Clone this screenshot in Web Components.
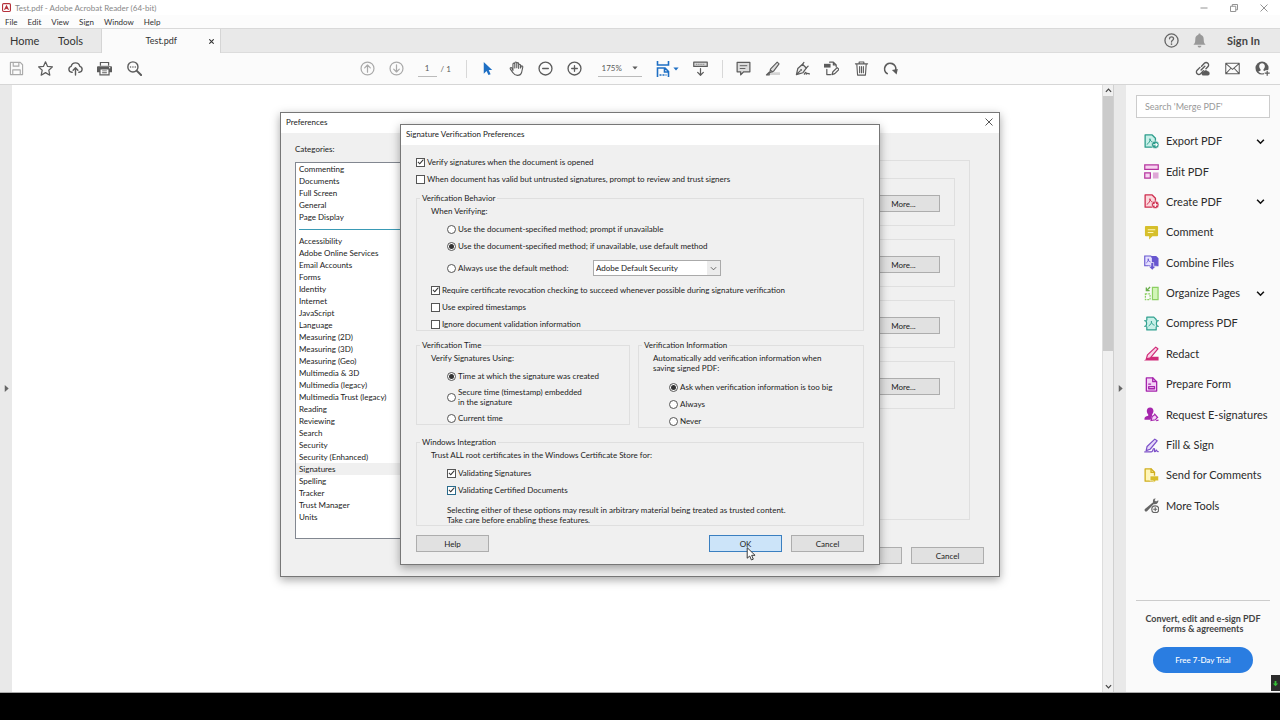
<!DOCTYPE html>
<html lang="en">
<head>
<meta charset="utf-8">
<title>Test.pdf - Adobe Acrobat Reader (64-bit)</title>
<style>
html,body{margin:0;height:100%;overflow:hidden;background:#fff}
body{font-family:Lato,"Open Sans","Noto Sans",sans-serif;font-size:8px;line-height:12px;color:#222}
</style>
</head>
<body>
<reader-app></reader-app>
<script>
const RESET='*{box-sizing:border-box}:host([hidden]){display:none}button,input,select{font:inherit;color:inherit;margin:0}button{padding:0;border:0;background:none}';
function define(name,css,render){
  customElements.define(name,class extends HTMLElement{
    constructor(){super();this.attachShadow({mode:'open'});}
    connectedCallback(){
      if(this.shadowRoot.childNodes.length)return;
      const t=document.createElement('template');
      t.innerHTML='<style>'+RESET+css+'</style>'+render(this);
      this.shadowRoot.append(t.content.cloneNode(true));
    }
  });
}
const attr=(el,n,d='')=>el.getAttribute(n)??d;

/* icons on a 16 unit grid */
const s=(w=1.3,c='currentColor',f='none')=>`fill="${f}" stroke="${c}" stroke-width="${w}" stroke-linecap="round" stroke-linejoin="round"`;
const PDF='M3.300 11c2.200-1.300 3.300-3.500 3-6 .3 2 1.300 3.400 3.200 4';
const ICONS={
 logo:'<rect x="1" y="1" width="14" height="14" rx="2" fill="#fff" stroke="#b5303a" stroke-width="2"/><path d="M3 13 8 3l5 10-5-3z" fill="#b5303a"/>',
 save:`<path ${s(1.2)} d="M1.500 1.500H12l2.500 2.500v10.500h-13zM4.500 1.500v4h6v-4M4 14.500v-5h8v5"/>`,
 star:`<path ${s()} d="M8 .9l2.200 4.900 5.200.5-3.900 3.500 1.100 5.300L8 12.400l-4.600 2.700 1.100-5.300L.6 6.300l5.200-.5z"/>`,
 cloud:`<path ${s(1.5)} d="M4.500 12H4a3.200 3.200 0 0 1-.6-6.300 4.700 4.700 0 0 1 9.200 0A3.200 3.200 0 0 1 12 12h-.5M8 15V7.500M5.500 9.800 8 7.300l2.500 2.500"/>`,
 print:'<path fill="currentColor" d="M3 1h10v4H3zM1 5.500h14a1 1 0 0 1 1 1V12h-2.500v3.500h-11V12H0V6.500a1 1 0 0 1 1-1z"/><path fill="#fbfbfb" d="M4.300 2.200h7.400V5H4.300zM3.800 9h8.400v5H3.800z"/><path fill="currentColor" d="M5.500 10h5v1h-5zm0 2h5v1h-5z"/><circle cx="13.500" cy="7.200" r=".7" fill="#fff"/>',
 find:`<circle ${s(1.5)} cx="6.300" cy="6.300" r="5.400"/><path ${s(2.2)} d="m10.800 10.800 4.200 4.200"/><g fill="currentColor"><circle cx="3.800" cy="6.300" r=".8"/><circle cx="6.300" cy="6.300" r=".8"/><circle cx="8.800" cy="6.300" r=".8"/></g>`,
 up:`<g ${s()}><circle cx="8" cy="8" r="6.900"/><path d="M8 12V4.500M5 7.300l3-3 3 3"/></g>`,
 down:`<g ${s()}><circle cx="8" cy="8" r="6.900"/><path d="M8 4v7.500M5 8.700l3 3 3-3"/></g>`,
 arrow:'<path fill="#1e6fc4" d="M4 1v12.500l3-2.800 2 4.300 2.300-1-2-4.300H13z"/>',
 hand:`<path ${s(1.2)} d="M4.200 10V3.500c0-1.600 2-1.600 2 0v4-5.300c0-1.600 2.100-1.600 2.100 0v5-4.400c0-1.500 2-1.500 2 0v5-3.200c0-1.500 2-1.500 2 0V7.500l.6-1.500c.6-1.300 2.100-.8 1.800.6L13.500 12c-.6 2.200-2 3.300-4.500 3.300-2.400 0-3.700-1-4.700-2.700L1.500 8.700c-.8-1.300.8-2.100 1.700-1z"/>`,
 minus:`<g ${s(1.4)}><circle cx="8" cy="8" r="6.900"/><path d="M5 8h6"/></g>`,
 plus:`<g ${s(1.4)}><circle cx="8" cy="8" r="6.900"/><path d="M5 8h6M8 5v6"/></g>`,
 fit:'<g fill="none" stroke="#1e6fc4" stroke-width="1.600"><path d="M2.500 0v4h11V0M2.500 16V7h7.500l3.500 3.500V16M9.500 7v4h4"/><path d="M4.500 14h7" stroke-dasharray="2 1"/></g>',
 keyboard:`<g ${s()}><path fill="#ddd" d="M.8 1.200h14.400v4.600H.8z"/><path d="M8 8v7M5 12.200l3 3 3-3"/></g><path stroke="currentColor" stroke-dasharray="1 1" d="M3 3.500h10"/>`,
 note:`<path ${s(1.3,'currentColor','#ddd')} d="M1.200 1.500h13.600v10H8.200L5 14.800v-3.300H1.200z"/><path stroke="currentColor" d="M4 5h8M4 8h6"/>`,
 marker:`<path fill="#d4d4d4" d="M5 12h11v3H3z"/><path ${s(1.2,'currentColor','#ddd')} d="M13 1.200 15 3 9 11l-4 1.500 1-4.200zM5.500 9.500l2.500 2M4.500 12l-3 2.800h3z"/>`,
 pen:`<path ${s(1.3,'currentColor','#eee')} d="M1.500 14.500 3 8l5-4.500 4 4-3.500 5zM1.500 14.500l4-4"/><path ${s()} d="M8 3.500 9.500 1.500M12 7.500l2-2M10 14c1.500-3 2-2 2 0 1.500-1.500 2-.5 3.500-.2"/><circle cx="6.500" cy="9.500" r="1" fill="currentColor"/>`,
 fields:`<path ${s()} d="M6 1.200h4l3 3V6M10 1.200v3h3M3 9v5.500h4M8.500 14.500l1-3L14 7l2 2-4.500 4.500z"/><path fill="currentColor" d="M0 3h7v4H0z"/>`,
 trash:`<path ${s(1.2)} d="M1.500 3h13M5.500 3V1h5v2M3 3.500l.8 11.500h8.400L13 3.500M6 6v6.500M8 6v6.500M10 6v6.500"/>`,
 rotate:`<path ${s(1.8)} d="M4.500 13.500A6 6 0 1 1 13.500 10"/><path fill="currentColor" d="M9.500 9.500 15.800 8.500l-1.300 6z"/>`,
 link:`<path ${s(1.5)} d="m6.500 9.500 4-4M7 5.500l3-3a2.600 2.600 0 0 1 3.700 3.700l-2 2M9 10.500l-3 3a2.600 2.600 0 0 1-3.700-3.700l3-3"/><path fill="currentColor" d="M9 15.500a2 2 0 0 1 0-4 2.600 2.600 0 0 1 4.600-.5A2.300 2.300 0 0 1 14 15.500z"/>`,
 mail:`<path ${s(1.1)} d="M.8 2.500h14.400v11H.8zM1 2.800l7 6.200 7-6.200M1.200 13.200 6 8M14.800 13.200 10 8"/>`,
 user:`<circle cx="7.500" cy="7.500" r="7" fill="currentColor"/><path fill="#fbfbfb" d="M7.500 2.500c2 0 3 1.500 3 3.200 0 1.500-.7 2.700-1.500 3.300v1.200l2.500 1.300a6 6 0 0 1-8 0L6 10.200V9c-.8-.6-1.500-1.800-1.500-3.300 0-1.700 1-3.200 3-3.200z"/><circle cx="13" cy="13" r="3.500" fill="#fbfbfb"/><path stroke="currentColor" stroke-width="1.300" d="M13 10.300v5.400M10.300 13h5.400"/>`,
 help:`<g ${s(1.4)}><circle cx="8" cy="8" r="7"/><path d="M5.900 6.200c0-3 4.300-2.700 4.300 0C10.200 7.800 8 7.800 8 9.600"/></g><circle cx="8" cy="11.800" r=".9" fill="currentColor"/>`,
 bell:'<path fill="currentColor" d="M8 .5c.8 0 1.200.5 1.200 1.300 2.500.6 3.300 2.500 3.300 5 0 3 .5 4 2 5.700h-13c1.500-1.700 2-2.700 2-5.700 0-2.500.8-4.400 3.300-5C6.800 1 7.200.5 8 .5zM6 13.500h4c0 2.500-4 2.500-4 0z"/>',
 chevron:'<path fill="none" stroke="currentColor" stroke-width="2.800" d="m2 5 6 6 6-6"/>',
 thin:'<path fill="none" stroke="currentColor" stroke-width="2" d="m2 5 6 6 6-6"/>',
 close:'<path fill="none" stroke="currentColor" stroke-width="1.800" d="m1 1 14 14M15 1 1 15"/>',
 shut:'<path fill="none" stroke="currentColor" stroke-width="3.400" d="m1 1 14 14M15 1 1 15"/>',
 bar:'<path fill="none" stroke="currentColor" stroke-width="1.800" d="M1 8h14"/>',
 restore:'<path fill="none" stroke="currentColor" stroke-width="1.800" d="M1 4.500h10.500V15H1zM4.500 4.500V1H15v10.500h-3.500"/>',
 caret:'<path fill="currentColor" d="M1 4h14l-7 8z"/>',
 right:'<path fill="currentColor" d="M4 0v16l9-8z"/>',
 export:`<g ${s(1.4,'#2d9d8c')}><path fill="#c7f0e8" d="M1.200 1h7.500l3.500 3.500V14h-11z"/><path stroke-width="1" d="${PDF}"/></g><circle cx="12" cy="11.500" r="4" fill="#2d9d8c" stroke="#fafafa" stroke-width=".6"/><path stroke="#fff" fill="none" stroke-width="1.200" d="M9.800 11.500h4.200m-1.600-1.700 1.700 1.700-1.700 1.700"/>`,
 edit:'<g stroke="#b5359f" stroke-width="1.300" fill="#f7d3f0"><path d="M.8 1h14.400v4.700H.8zM.8 9.500h6V15h-6z"/></g><path fill="#dfa6d6" d="M9.500 9h6v6.500h-6z"/>',
 create:`<g ${s(1.4,'#cf2f50')}><path fill="#fbd7dc" d="M1.200 1h7.500l3.500 3.500V14h-11z"/><path stroke-width="1" d="${PDF}"/></g><circle cx="12" cy="11.500" r="4" fill="#cf2f50" stroke="#fafafa" stroke-width=".6"/><path stroke="#fff" stroke-width="1.300" d="M9.600 11.500h4.800M12 9.100v4.800"/>`,
 comment:'<path fill="#d6bf2b" d="M2 1h12a1 1 0 0 1 1 1v9a1 1 0 0 1-1 1H9l-3.500 3.500V12H2a1 1 0 0 1-1-1V2a1 1 0 0 1 1-1z"/><path stroke="#fff7b5" stroke-width="1.200" d="M4 5h8M4 8h6"/>',
 combine:'<path fill="#6756cf" d="M8 1h5l2.500 2.500V12H8z"/><path fill="#e5e0ff" stroke="#6756cf" stroke-width="1.200" d="M.8 1h6.500L9 3v8.500H.8z"/><path fill="none" stroke="#6756cf" d="M2.500 8.500c1.500-1 2.300-2.500 2-4.500 0 2 1 3 2.500 3.500"/><path fill="#6756cf" stroke="#fff" stroke-width=".7" d="M7.300 8h3v4H13l-4.200 4L4.600 12h2.700z"/>',
 organize:'<path fill="#d2f5b8" stroke="#8ccf63" stroke-width="1.300" d="M9 1.500h6v13H9z"/><path fill="none" stroke="#8ccf63" stroke-width="1.300" stroke-dasharray="2 1" d="M1.500 8.500h5v6h-5z"/><path fill="none" stroke="#6aae4c" stroke-width="1.400" d="M6.500 1 2.500 5M2.500 1.500V5H6"/>',
 compress:`<g ${s(1.3,'#30a08f')}><path fill="#c7f0e8" d="M3 5V1.200h7.500L13 3.700V5M3 11v3.800h10V11"/><path fill="#c7f0e8" stroke="none" d="M3.500 4.500h9v7h-9z"/><path d="M.8 5c1.500 0 2 1 2 3s-.5 3-2 3M15.200 5c-1.500 0-2 1-2 3s.5 3 2 3"/><path stroke-width="1" d="M5.200 10.500c2-1.200 2.900-3 2.700-5 .1 2.500 1 3.500 2.900 4.200"/></g>`,
 redact:'<path fill="#d02a78" d="M6 11.500h9.500v4H0z"/><path fill="#fad2e6" stroke="#d02a78" stroke-width="1.300" stroke-linejoin="round" d="M12.500 1.200 14.800 3 7 12.500l-4.500 1.300 1.200-4.300z"/>',
 form:`<g ${s(1.4,'#a626ad')}><path fill="#f3d1f6" d="M2.500 1h7l4 4v10h-11z"/><path d="M9.300 1v4h4M5 7.500h2M5 10.300h6.200v2.200H5z"/></g>`,
 request:'<path fill="#a626ad" d="M6.500.5c2.400 0 3.600 1.700 3.600 3.700 0 1.700-.8 3-1.500 3.700v1.500L7 13.500H.5C.2 10.800 1.500 10 4.500 9.300V7.900C3.700 7.200 3 5.900 3 4.200 3 2.200 4.100.5 6.500.5z"/><path fill="#f3d1f6" stroke="#a626ad" stroke-width="1.200" d="m7.500 14.500 1.200-4.300 3-2.200 2.500 3-2 2.700zM13 14.500l2.500-.5M11 7l4 4.500"/>',
 fill:`<g ${s(1.3,'#7c50c8')}><path fill="#e6daf9" d="M11.500 1.200 14 3 6.500 12l-4.200 1.500 1-4.500z"/><path d="M.8 14.800h7c2 0 1.500-4 3-3.500s-.6 3.200.7 3.200 1-1.700 1.700-1.500.3 1.600 2 1.500"/></g>`,
 send:`<g ${s(1.4,'#d0ae1f')}><path fill="#fff6b8" d="M1.200 1h6.500l3.500 3.500V14h-10z"/><path d="M7.500 1v3.700h3.700"/></g><path fill="#d8bd2a" stroke="#fbfbfb" stroke-width=".6" d="M6.500 8.500h9v5.200h-3l-2.500 2v-2H6.500z"/>`,
 wrench:`<path fill="#666" d="M10.500.8c-1 1-1.200 2.500-.8 3.700L1 11.700c-1.300 1.200.7 3.800 2.200 2.400L10.500 6.500c1.800.6 4-.2 4.700-2.500l.1-1.700-2.500 1.500-1.500-1.300L12.500.5z"/><circle cx="12" cy="12" r="3.700" fill="#fbfbfb" stroke="#666" stroke-width="1.300"/><path stroke="#666" stroke-width="1.200" d="M12 9.800v4.400M9.800 12h4.400"/>`,
 fetch:'<path fill="#35c135" d="M6 2h4v6h4l-6 6-6-6h4z"/>',
 pointer:'<path fill="#fff" stroke="#333" stroke-width="1.100" d="M2.500.8v12l2.900-2.500 1.900 4.500 2.200-.9-1.900-4.400h3.900z"/>'
};
define('ui-icon',':host{display:block;flex:none;width:16px;height:16px}svg{display:block;width:100%;height:100%}',
 el=>`<svg viewBox="0 0 16 16" aria-hidden="true">${ICONS[attr(el,'name')]}</svg>`);

define('icon-button',':host{display:block;flex:none}button{display:flex;align-items:center;justify-content:center;width:16px;height:16px}ui-icon{width:15px;height:15px}',
 el=>`<button type="button" aria-label="${attr(el,'label')}"><ui-icon name="${attr(el,'icon')}"></ui-icon></button>`);

define('title-bar',`:host{display:flex;align-items:center;height:15px;background:#fff;color:#888;padding:0 12px 0 2px;font-size:8px;gap:4px}
 .logo{width:9px;height:9px}.t{flex:1}.w{display:flex;gap:22px;color:#888}.w button{width:8px;height:8px}.w ui-icon{width:8px;height:8px}`,
 ()=>`<ui-icon class="logo" name="logo"></ui-icon><span class="t">Test.pdf - Adobe Acrobat Reader (64-bit)</span>
 <div class="w"><button aria-label="Minimize"><ui-icon name="bar"></ui-icon></button><button aria-label="Restore"><ui-icon name="restore"></ui-icon></button><button aria-label="Close"><ui-icon name="close"></ui-icon></button></div>`);

define('menu-bar',':host{display:flex;align-items:center;height:13px;background:#fcfcfc;padding:0 5px;gap:10px;font-size:8px;color:#333}a{color:inherit;text-decoration:none}',
 ()=>['File','Edit','View','Sign','Window','Help'].map(m=>`<a href="#">${m}</a>`).join(''));

define('tab-strip',`:host{display:flex;align-items:stretch;height:25px;background:#e9e9e9;border-top:1px solid #d9d9d9;border-bottom:1px solid #dcdcdc;font-size:11px;color:#333}
 .n{padding-left:10px;text-align:left;width:39px}.n2{padding-left:19px;width:62px;text-align:left}
 .tab{width:120px;margin-bottom:-1px;background:#fbfbfb;border-left:1px solid #d5d5d5;border-right:1px solid #d5d5d5;display:flex;align-items:center;justify-content:flex-end;gap:31px;padding-right:5px;font-size:9px}
 .tab ui-icon{width:5px;height:5px}.x{width:7px;height:10px;display:grid;place-items:center}
 .r{margin-left:auto;display:flex;align-items:center;color:#666}.s{font-weight:bold;color:#444;width:73px;text-align:center}.bell{color:#999}.r icon-button+icon-button{margin-left:12px}`,
 ()=>`<button class="n">Home</button><button class="n2">Tools</button><div class="tab"><span>Test.pdf</span><button class="x" aria-label="Close tab"><ui-icon name="shut"></ui-icon></button></div>
 <div class="r"><icon-button icon="help" label="Help"></icon-button><icon-button class="bell" icon="bell" label="Notifications"></icon-button><button class="s">Sign In</button></div>`);

const ib=(i,l)=>`<icon-button icon="${i}" label="${l}"></icon-button>`;
define('tool-bar',`:host{display:grid;grid-template-columns:1fr auto 1fr;align-items:center;height:32px;background:#fbfbfb;border-bottom:1px solid #d6d6d6;padding:0 10px 0 8px;color:#5c5c5c;font-size:8px}
 div{display:flex;align-items:center}.l{width:134px;justify-content:space-between}.c{padding-right:20px}.g{gap:13px}.e{width:163px;justify-content:space-between}
 .r{justify-self:end;gap:14px}.dim{color:#aaa}
 input{width:19px;height:17px;border:0;border-bottom:1px solid #bbb;background:none;text-align:center;padding:0;margin-left:13px}
 .of{width:12px;margin-left:4px;white-space:nowrap}.sep{width:1px;height:18px;background:#d8d8d8;margin:0 13px}
 .z{width:44px;height:17px;border-bottom:1px solid #bbb;margin-left:15px;position:relative}select{appearance:none;border:0;background:none;width:100%;padding:0 0 0 4px;outline:0}
 .z ui-icon{position:absolute;right:4px;width:6px;height:6px;pointer-events:none}
 .f{display:flex;align-items:center;width:24px;margin:0 14px 0 13px;gap:2px}.f ui-icon:last-child{width:6px;height:6px;color:#1e6fc4}`,
 ()=>`<div class="l"><icon-button class="dim" icon="save" label="Save"></icon-button>${ib('star','Star')}${ib('cloud','Upload')}${ib('print','Print')}${ib('find','Find')}</div>
 <div class="c"><div class="g dim">${ib('up','Previous page')}${ib('down','Next page')}</div><input aria-label="Page" value="1"><span class="of">/ 1</span><span class="sep"></span>
 <div class="g">${ib('arrow','Select')}${ib('hand','Pan')}${ib('minus','Zoom out')}${ib('plus','Zoom in')}</div>
 <div class="z"><select aria-label="Zoom"><option>175%</option></select><ui-icon name="caret"></ui-icon></div>
 <button class="f" aria-label="Fit width"><ui-icon name="fit"></ui-icon><ui-icon name="caret"></ui-icon></button>${ib('keyboard','Read mode')}<span class="sep"></span>
 <div class="e">${ib('note','Comment')}${ib('marker','Highlight')}${ib('pen','Sign')}${ib('fields','Fields')}${ib('trash','Delete')}${ib('rotate','Rotate')}</div></div>
 <div class="r">${ib('link','Share link')}${ib('mail','Email')}${ib('user','Invite')}</div>`);

define('side-rail',':host{display:flex;align-items:center;justify-content:center;width:12px;flex:none;background:#e9e9e9;color:#666}button{width:7px;height:7px}ui-icon{width:7px;height:7px}',
 el=>`<button aria-label="${attr(el,'label')}"><ui-icon name="right"></ui-icon></button>`);

define('scroll-track',`:host{display:flex;flex-direction:column;align-items:center;width:12px;flex:none;background:#f0f0f0;border-left:1px solid #ddd;border-right:1px solid #d0d0d0;color:#444}
 button{width:11px;height:11px;display:grid;place-items:center}ui-icon{width:7px;height:7px}.u{transform:rotate(180deg)}.thumb{width:100%;height:42%;background:#cbcbcb;margin-bottom:auto}`,
 ()=>`<button class="u" aria-label="Scroll up"><ui-icon name="chevron"></ui-icon></button><div class="thumb"></div><button aria-label="Scroll down"><ui-icon name="chevron"></ui-icon></button>`);

define('tool-item',`:host{display:flex;align-items:center;min-width:0}a{display:flex;align-items:center;flex:1;gap:7px;color:#2b2b2b;text-decoration:none;font-size:11px;line-height:16px;white-space:nowrap}
 ui-icon{width:15px;height:15px}a .more{width:9px;height:9px;margin-left:auto;color:#111}`,
 el=>`<a href="#"><ui-icon name="${attr(el,'icon')}"></ui-icon><span><slot></slot></span>${el.hasAttribute('more')?'<ui-icon class="more" name="chevron"></ui-icon>':''}</a>`);

define('tools-panel',`:host{display:flex;flex-direction:column;width:154px;flex:none;background:#fafafa;padding:10px 10px 0;position:relative}
 input{width:100%;height:23px;border:1px solid #ccc;background:#fff;padding:0 8px;font-size:9px;outline:0}input::placeholder{color:#999;opacity:1}
 nav{display:grid;grid-template-columns:minmax(0,1fr);grid-auto-rows:1fr;height:395px;margin-top:8px;padding:0 5px 0 8px}
 .promo{margin-top:auto;border-top:1px solid #ccc;height:92px;padding-top:13px;text-align:center;font-size:9px;font-weight:bold;line-height:10px;color:#444;white-space:nowrap}
 p{margin:0 0 13px}.promo button{width:100px;height:26px;border-radius:13px;background:#2a7de1;color:#fff;font-size:8px;font-weight:500}
 .b{position:absolute;right:0;bottom:1px;width:9px;height:16px;background:#2b2b2b;display:grid;place-items:center}.b ui-icon{width:7px;height:7px}`,
 ()=>`<input type="search" aria-label="Search tools" placeholder="Search 'Merge PDF'"><nav>`+
 [['export','Export PDF',1],['edit','Edit PDF'],['create','Create PDF',1],['comment','Comment'],['combine','Combine Files'],['organize','Organize Pages',1],['compress','Compress PDF'],['redact','Redact'],['form','Prepare Form'],['request','Request E-signatures'],['fill','Fill &amp; Sign'],['send','Send for Comments'],['wrench','More Tools']]
 .map(([i,t,m])=>`<tool-item icon="${i}"${m?' more':''}>${t}</tool-item>`).join('')+
 `</nav><div class="promo"><p>Convert, edit and e-sign PDF<br>forms &amp; agreements</p><button>Free 7-Day Trial</button></div><span class="b"><ui-icon name="fetch"></ui-icon></span>`);

define('push-button',`:host{display:block;flex:none;width:73px}button{display:block;width:100%;height:17px;background:#e1e1e1;border:1px solid #adadad;line-height:14px;color:#222;text-align:center}
 :host([active]) button{background:#cce4f9;border-color:#3a7fc0}`,
 el=>`<button type="button"${attr(el,'label')?` aria-label="${attr(el,'label')}"`:''}><slot></slot></button>`);

define('check-option',`:host{display:block}label{display:flex;align-items:center;gap:2px;min-height:12px;line-height:12px;white-space:nowrap}
 :host([lines]) label{line-height:10px}
 input{appearance:none;flex:none;width:9px;height:9px;border:1px solid #555;background:#fff;display:grid;place-items:center}
 input[type=radio]{border-radius:50%}input[type=radio]:checked::before{content:"";width:5px;height:5px;border-radius:50%;background:#333}
 input[type=checkbox]:checked::before{content:"";width:7px;height:7px;background:#333;clip-path:polygon(8% 52%,18% 42%,38% 66%,86% 10%,96% 20%,40% 84%)}
 :host([hot]) input{border-color:#2a6b8c}`,
 el=>`<label><input type="${attr(el,'type','checkbox')}" name="${attr(el,'name','option')}"${el.hasAttribute('checked')?' checked':''}><span><slot></slot></span></label>`);

define('group-box',`:host{display:block}fieldset{min-width:0;height:100%;margin:0;padding:0 0 0 14px;border:1px solid #dfdfdf}legend{margin-left:-11px;padding:0 2px;line-height:12px;height:12px}`,
 el=>`<fieldset>${attr(el,'label')?`<legend>${attr(el,'label')}</legend>`:''}<slot></slot></fieldset>`);

define('dialog-window',`:host{display:flex;flex-direction:column;background:#f0f0f0;border:1px solid #777;box-shadow:0 3px 9px rgba(0,0,0,.35);position:relative}
 header{display:flex;align-items:center;justify-content:space-between;height:20px;flex:none;background:#fff;padding:0 6px 2px 5px}button{width:8px;height:8px}ui-icon{width:8px;height:8px;color:#444}`,
 el=>`<header><span>${attr(el,'heading')}</span>${el.hasAttribute('closable')?'<button aria-label="Close"><ui-icon name="close"></ui-icon></button>':''}</header><slot></slot>`);

define('category-list',`:host{display:block;border:1px solid #828790;background:#fff}ul{list-style:none;margin:0;padding:0 0 15px}
 li{height:12px;line-height:12px;padding-left:3px;white-space:nowrap}.sep{padding-top:6px}.sep::before{content:"";display:block;height:1px;background:#3a9ab5}.on{background:#f0f0f0}`,
 ()=>'<ul role="listbox" aria-label="Categories">'+['Commenting','Documents','Full Screen','General','Page Display','','Accessibility','Adobe Online Services','Email Accounts','Forms','Identity','Internet','JavaScript','Language','Measuring (2D)','Measuring (3D)','Measuring (Geo)','Multimedia &amp; 3D','Multimedia (legacy)','Multimedia Trust (legacy)','Reading','Reviewing','Search','Security','Security (Enhanced)','Signatures','Spelling','Tracker','Trust Manager','Units']
 .map(c=>c?`<li role="option"${c==='Signatures'?' class="on" aria-selected="true"':''}>${c}</li>`:'<li class="sep" role="presentation"></li>').join('')+'</ul>');

define('preferences-dialog',`:host{display:block;width:720px}dialog-window{min-height:465px}
 .body{display:grid;grid-template-columns:140px 1fr;gap:0 20px;padding:10px 29px 0 14px}.cap{grid-column:1/-1;line-height:12px;margin-bottom:7px}
 .panel{border:1px solid #dfdfdf;height:360px;margin-top:-2px;padding:17px 14px 0;display:flex;flex-direction:column;gap:13px}
 section{border:1px solid #dfdfdf;height:48px;padding:3px 14px 0;display:flex;align-items:center;justify-content:flex-end}
 .foot{display:flex;justify-content:flex-end;gap:9px;padding:8px 15px 12px}`,
 ()=>`<dialog-window heading="Preferences" closable><div class="body"><span class="cap">Categories:</span><category-list></category-list><div class="panel">${'<section><push-button>More...</push-button></section>'.repeat(4)}</div></div>
 <div class="foot"><push-button label="Confirm"></push-button><push-button>Cancel</push-button></div></dialog-window>`);

define('signature-dialog',`:host{display:block;width:480px}.body{padding:11px 15px 12px;line-height:12px;white-space:nowrap}
 p{margin:0}.stack{display:grid;gap:5px}.in{padding-left:16px}.behavior{margin-top:7px}
 .pad{margin-top:1px}.t6{margin-top:6px}.t8{margin-top:8px}
 .row{display:flex;align-items:center;height:16px}.row check-option{width:146px}.combo{width:128px;height:16px;position:relative;border:1px solid #aaa;background:#fff}
 select{appearance:none;border:0;background:none;width:100%;height:14px;padding:0 0 0 2px;line-height:14px;outline:0;display:block}
 .combo span{position:absolute;right:0;top:0;width:13px;height:14px;background:#ececec;display:grid;place-items:center;pointer-events:none}.combo ui-icon{width:7px;height:7px;color:#555}
 .pair{display:grid;grid-template-columns:214px 1fr;gap:8px;align-items:start;margin-top:8px}
 .two{line-height:10px;margin-top:2px}.note{line-height:10px;margin-top:9px}
 .buttons{display:flex;gap:9px;margin-top:9px}.buttons push-button:first-child{margin-right:auto}`,
 ()=>`<dialog-window heading="Signature Verification Preferences"><div class="body">
 <div class="stack"><check-option checked>Verify signatures when the document is opened</check-option><check-option>When document has valid but untrusted signatures, prompt to review and trust signers</check-option></div>
 <group-box class="behavior" label="Verification Behavior"><p class="pad">When Verifying:</p>
  <div class="stack in t6"><check-option type="radio">Use the document-specified method; prompt if unavailable</check-option><check-option type="radio" checked>Use the document-specified method; if unavailable, use default method</check-option></div>
  <div class="row in t8"><check-option type="radio">Always use the default method:</check-option><div class="combo"><select aria-label="Default method"><option>Adobe Default Security</option></select><span><ui-icon name="thin"></ui-icon></span></div></div>
  <div class="stack t8"><check-option checked>Require certificate revocation checking to succeed whenever possible during signature verification</check-option><check-option>Use expired timestamps</check-option><check-option>Ignore document validation information</check-option></div></group-box>
 <div class="pair"><group-box label="Verification Time"><p class="pad">Verify Signatures Using:</p><div class="stack in t6"><check-option type="radio" checked>Time at which the signature was created</check-option><check-option type="radio" lines>Secure time (timestamp) embedded<br>in the signature</check-option><check-option type="radio">Current time</check-option></div></group-box>
  <group-box label="Verification Information"><p class="two">Automatically add verification information when<br>saving signed PDF:</p><div class="stack in t8"><check-option type="radio" checked>Ask when verification information is too big</check-option><check-option type="radio">Always</check-option><check-option type="radio">Never</check-option></div></group-box></div>
 <group-box class="t8" label="Windows Integration"><p class="pad">Trust ALL root certificates in the Windows Certificate Store for:</p>
  <div class="stack in t6"><check-option checked>Validating Signatures</check-option><check-option checked hot>Validating Certified Documents</check-option></div>
  <p class="note in">Selecting either of these options may result in arbitrary material being treated as trusted content.<br>Take care before enabling these features.</p></group-box>
 <div class="buttons"><push-button>Help</push-button><push-button active>OK</push-button><push-button>Cancel</push-button></div></div></dialog-window>`);

define('reader-app',`:host{display:flex;flex-direction:column;height:100vh;position:relative}main{display:flex;flex:1;min-height:0;border-bottom:1px solid #aaa}
 .page{flex:1;background:#fff}footer{height:27px;background:#000;flex:none}
 .layer{position:absolute;inset:0;display:grid;justify-content:center;align-content:start;padding-top:112px}.layer>*{grid-area:1/1}.front{justify-self:center;position:relative;margin-top:12px}
 .cursor{position:absolute;left:345px;top:423px;width:14px;height:14px}`,
 ()=>`<title-bar></title-bar><menu-bar></menu-bar><tab-strip></tab-strip><tool-bar></tool-bar>
 <main><side-rail label="Open navigation"></side-rail><div class="page"></div><scroll-track></scroll-track><side-rail label="Hide tools"></side-rail><tools-panel></tools-panel></main><footer></footer>
 <div class="layer"><preferences-dialog></preferences-dialog><div class="front"><signature-dialog></signature-dialog><ui-icon class="cursor" name="pointer"></ui-icon></div></div>`);
</script>
</body>
</html>
